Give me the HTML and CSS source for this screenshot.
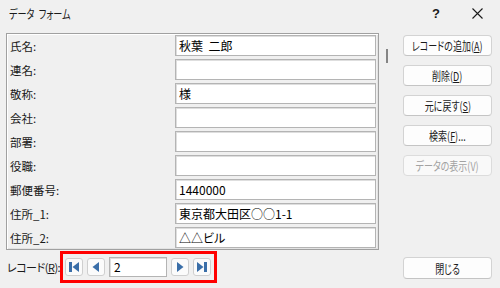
FILE: index.html
```html
<!DOCTYPE html>
<html lang="ja">
<head>
<meta charset="utf-8">
<link rel="stylesheet" href="styles.css">
</head>
<body>
<div class="dialog">
  <div class="titlebar">
    <span class="title">データ&nbsp;&nbsp;フォーム</span>
    <span class="help">?</span>
    <span class="close-x">
      <svg width="11" height="11" viewBox="0 0 11 11"><path d="M0.5 0.5L10.5 10.5M10.5 0.5L0.5 10.5" stroke="#1a1a1a" stroke-width="1.1" fill="none"/></svg>
    </span>
  </div>
  <div class="content">
    <div class="left">
      <div class="panel">
        <div class="row"><span class="label">氏名:</span><div class="field">秋葉&nbsp;&nbsp;二郎</div></div>
        <div class="row"><span class="label">連名:</span><div class="field"></div></div>
        <div class="row"><span class="label">敬称:</span><div class="field">様</div></div>
        <div class="row"><span class="label">会社:</span><div class="field"></div></div>
        <div class="row"><span class="label">部署:</span><div class="field"></div></div>
        <div class="row"><span class="label">役職:</span><div class="field"></div></div>
        <div class="row"><span class="label">郵便番号:</span><div class="field">1440000</div></div>
        <div class="row"><span class="label">住所_1:</span><div class="field">東京都大田区○○1-1</div></div>
        <div class="row"><span class="label">住所_2:</span><div class="field">△△ビル</div></div>
      </div>
      <div class="record">
        <span class="rec-label">レコード(<u>R</u>):</span>
        <div class="nav">
          <span class="nbtn"><svg width="12" height="12" viewBox="0 0 12 12"><rect x="1" y="1" width="3" height="10" fill="#3a6ea8"/><path d="M11 1L4.5 6L11 11Z" fill="#3a6ea8"/></svg></span>
          <span class="nbtn"><svg width="12" height="12" viewBox="0 0 12 12"><path d="M9 1L2.5 6L9 11Z" fill="#3a6ea8"/></svg></span>
          <div class="rec-input">2</div>
          <span class="nbtn"><svg width="12" height="12" viewBox="0 0 12 12"><path d="M3 1L9.5 6L3 11Z" fill="#3a6ea8"/></svg></span>
          <span class="nbtn"><svg width="12" height="12" viewBox="0 0 12 12"><path d="M1 1L7.5 6L1 11Z" fill="#3a6ea8"/><rect x="8" y="1" width="3" height="10" fill="#3a6ea8"/></svg></span>
        </div>
      </div>
    </div>
    <div class="scroll"><div class="thumb"></div></div>
    <div class="actions">
      <div class="btn"><span class="bt">レコードの追加(<u>A</u>)</span></div>
      <div class="btn"><span class="bt">削除(<u>D</u>)</span></div>
      <div class="btn"><span class="bt">元に戻す(<u>S</u>)</span></div>
      <div class="btn"><span class="bt">検索(<u>F</u>)...</span></div>
      <div class="btn disabled"><span class="bt">データの表示(V)</span></div>
      <div class="btn close-btn"><span class="bt">閉じる</span></div>
    </div>
  </div>
</div>
</body>
</html>
```
FILE: styles.css
```css
html, body {
  margin: 0;
  padding: 0;
  background: #f0f0f0;
}
body {
  font-family: "Noto Sans CJK JP", "Noto Sans", sans-serif;
  font-size: 12px;
  font-feature-settings: "palt";
  color: #1a1a1a;
}
.dialog {
  width: 500px;
  height: 288px;
  display: flex;
  flex-direction: column;
  overflow: hidden;
}
.titlebar {
  height: 33px;
  display: flex;
  align-items: flex-start;
  padding-top: 5px;
  box-sizing: border-box;
}
.title {
  margin-left: 9px;
  line-height: 18px;
  font-size: 12px;
  display: inline-block;
  transform: scaleX(0.76);
  transform-origin: left center;
  white-space: nowrap;
}
.help {
  margin-left: auto;
  font-family: "Liberation Sans", sans-serif;
  font-weight: bold;
  font-size: 13px;
  line-height: 18px;
  margin-right: 32px;
}
.close-x {
  margin-right: 17px;
  padding-top: 3px;
  line-height: 0;
}
.content {
  flex: 1;
  display: flex;
  padding-left: 6px;
}
.left {
  width: 373px;
  display: flex;
  flex-direction: column;
}
.panel {
  height: 217px;
  box-sizing: border-box;
  border: 1px solid #a0a0a0;
  box-shadow: inset 1px 1px 0 #ffffff, inset -1px -1px 0 #e3e3e3;
  padding: 1px 2px 1px 0;
  display: flex;
  flex-direction: column;
  gap: 3px;
}
.row {
  height: 21px;
  display: flex;
  align-items: center;
}
.label {
  width: 168px;
  padding-left: 3px;
  box-sizing: border-box;
  font-size: 11.5px;
}
.field {
  width: 201px;
  height: 21px;
  box-sizing: border-box;
  background: #fff;
  border: 1px solid #b4b4b4;
  box-shadow: inset 1px 1px 0 #dedede;
  padding-left: 3px;
  line-height: 19px;
  color: #000;
  white-space: nowrap;
}
.record {
  margin-top: 1px;
  height: 32px;
  display: flex;
  align-items: center;
  padding-left: 1px;
}
.rec-label {
  width: 53px;
  white-space: nowrap;
  font-size: 11px;
  letter-spacing: -0.5px;
}
.nav {
  height: 32px;
  box-sizing: border-box;
  border: 3px solid #ff0000;
  padding: 0 3px 0 2px;
  display: flex;
  align-items: center;
  gap: 4px;
}
.nbtn {
  width: 18px;
  height: 18px;
  box-sizing: border-box;
  border: 1px solid #cfcfcf;
  border-radius: 3px;
  background: #fbfbfb;
  display: flex;
  align-items: center;
  justify-content: center;
}
.rec-input {
  width: 58px;
  height: 20px;
  box-sizing: border-box;
  border: 1px solid #b4b4b4;
  box-shadow: inset 1px 1px 0 #dedede;
  background: #fff;
  padding-left: 4px;
  line-height: 18px;
  color: #000;
}
.scroll {
  width: 24px;
}
.thumb {
  width: 2px;
  height: 14px;
  background: #858585;
  margin-left: 7px;
  margin-top: 16px;
}
.actions {
  width: 89px;
  display: flex;
  flex-direction: column;
  gap: 9px;
  padding-top: 2px;
  padding-bottom: 9px;
}
.btn {
  height: 21px;
  box-sizing: border-box;
  border: 1px solid #d3d3d3;
  border-bottom-color: #c4c4c4;
  border-radius: 4px;
  background: #fdfdfd;
  display: flex;
  align-items: center;
  justify-content: center;
  color: #1a1a1a;
  white-space: nowrap;
}
.bt {
  display: inline-block;
  flex-shrink: 0;
  font-size: 12px;
  line-height: 19px;
  transform: scaleX(0.75);
}
.btn.disabled {
  color: #a2a2a2;
  background: #f9f9f9;
  border-color: #dcdcdc;
}
.close-btn {
  margin-top: auto;
  height: 22px;
}
```
